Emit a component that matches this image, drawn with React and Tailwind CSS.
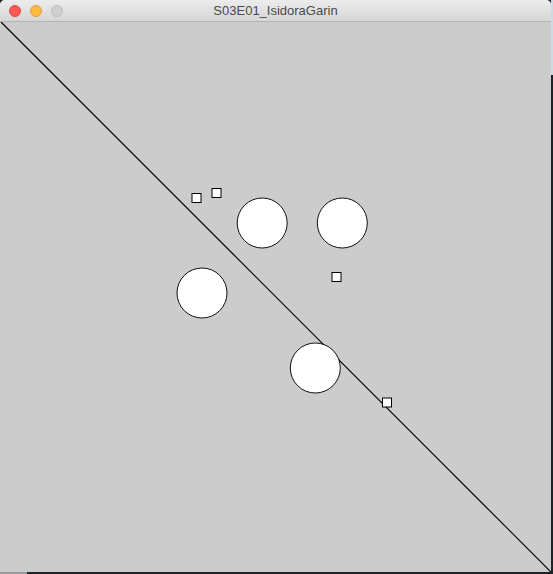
import React from 'react';

const circles = [
  [262.2, 201],
  [342.3, 201],
  [202, 271],
  [315.3, 346],
];

const squares = [
  [192, 171.5],
  [212, 166.5],
  [332, 250.5],
  [382.5, 376],
];

const App = () => {
  return (
    <div className="w-[553px] h-[574px] bg-[#1c2228] relative overflow-hidden">
      <div className="absolute right-0 top-0 w-[2px] h-[75px] bg-[#c9dce2]" />
      <div className="absolute left-0 bottom-0 w-[27px] h-[2px] bg-[#9a9a9a]" />
      <div className="relative w-[551px] h-[572px] rounded-t-[5px] overflow-hidden bg-[#cccccc] flex flex-col">
        <div className="relative h-[22px] shrink-0 border-b border-[#b4b4b4] bg-gradient-to-b from-[#ececec] to-[#d6d6d6] flex items-center justify-center">
          <div className="absolute left-[9px] top-[5px] flex gap-[9px]">
            <span className="block w-[12px] h-[12px] rounded-full bg-[#fc5753] border border-[#df4744]" />
            <span className="block w-[12px] h-[12px] rounded-full bg-[#fdbc40] border border-[#de9f34]" />
            <span className="block w-[12px] h-[12px] rounded-full bg-[#d0d0d0] border border-[#bcbcbc]" />
          </div>
          <span
            className="text-[13px] text-[#4a4a4a] leading-none"
            style={{ fontFamily: '"Liberation Sans", "Helvetica Neue", Arial, sans-serif' }}
          >
            S03E01_IsidoraGarin
          </span>
        </div>
        <svg width="551" height="550" viewBox="0 0 551 550" className="block">
          <rect x="0" y="0" width="551" height="550" fill="#cccccc" />
          <line x1="1" y1="0" x2="551" y2="550" stroke="#000" strokeWidth="1.2" />
          {circles.map(([cx, cy], i) => (
            <circle key={i} cx={cx} cy={cy} r="25" fill="#fff" stroke="#111" strokeWidth="1" />
          ))}
          {squares.map(([x, y], i) => (
            <rect key={i} x={x} y={y} width="9" height="9" fill="#fff" stroke="#000" strokeWidth="1" />
          ))}
        </svg>
      </div>
    </div>
  );
};

export default App;
